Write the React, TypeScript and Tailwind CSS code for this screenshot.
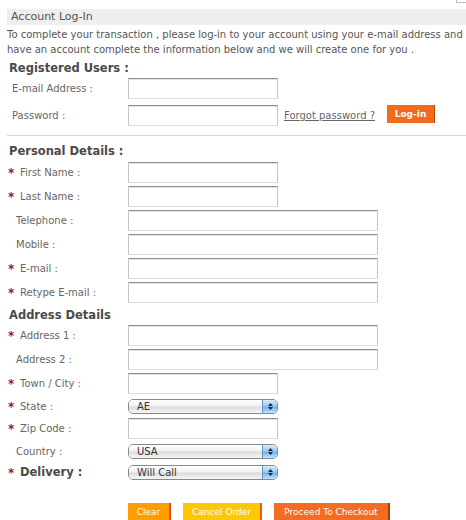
const font = "font-['DejaVu_Sans',Verdana,sans-serif]"

function TextBox({ long }: { long?: boolean }) {
  return (
    <div
      className={
        (long ? "w-[250px]" : "w-[150px]") +
        " h-[21px] shrink-0 bg-white border border-[#c6c6c6] border-t-[#8c8c8c] border-b-[#dedede] shadow-[inset_0_1px_0_#e4e4e4]"
      }
    />
  )
}

function Select({ value }: { value: string }) {
  return (
    <div className="w-[150px] h-[15px] flex rounded-[5px] border border-[#8a8a8a] overflow-hidden">
      <div className="flex-1 pl-[8px] leading-[13px] text-[10px] text-[#333] bg-[linear-gradient(#ffffff,#f1f1f1_45%,#dcdcdc_55%,#f6f6f6)]">
        {value}
      </div>
      <div className="w-[15px] border-l border-[#6a8fc0] flex flex-col items-center justify-center gap-[1px] bg-[linear-gradient(#d8ecfd,#9ccaf5_45%,#6fb0ee_55%,#c4e4fd)]">
        <svg width="5" height="3" viewBox="0 0 5 3"><path d="M0 3L2.5 0L5 3Z" fill="#1b2a44" /></svg>
        <svg width="5" height="3" viewBox="0 0 5 3"><path d="M0 0L2.5 3L5 0Z" fill="#1b2a44" /></svg>
      </div>
    </div>
  )
}

function Label({ text, req, bold }: { text: string; req?: boolean; bold?: boolean }) {
  return (
    <div className="w-[128px] shrink-0 flex items-center">
      {req ? (
        <span className="w-[20px] shrink-0 pl-[8px] text-[#8a1a4c] text-[12px] font-bold leading-none">*</span>
      ) : (
        <span className="w-[16px] shrink-0" />
      )}
      <span
        className={
          bold
            ? "text-[11.5px] font-bold text-[#4a4a4a]"
            : "text-[10px] text-[#666]"
        }
      >
        {text}
      </span>
    </div>
  )
}

export default function App() {
  return (
    <div className={"w-[466px] h-[520px] overflow-hidden relative bg-white text-[10px] text-[#555] " + font}>
      <div className="absolute top-[-2px] left-[456px] w-[14px] h-[5px] border border-[#bbb]" />

      <div className="mt-[9px] ml-[7px] h-[16px] bg-[#efefef] pl-[4px] leading-[16px] text-[11px] text-[#555]">
        Account Log-In
      </div>
      <div className="mt-[2px] ml-[7px] leading-[15px] whitespace-nowrap text-[#555]">
        <div>To complete your transaction , please log-in to your account using your e-mail address and if you don't</div>
        <div>have an account complete the information below and we will create one for you .</div>
      </div>

      <div className="mt-[3px] ml-[9px] h-[16px] leading-[16px] text-[11.5px] font-bold text-[#4a4a4a]">
        Registered Users :
      </div>
      <div className="mt-[2px] flex items-center h-[21px]">
        <div className="w-[128px] shrink-0 pl-[12px] text-[#666]">E-mail Address :</div>
        <TextBox />
      </div>
      <div className="mt-[6px] flex items-center h-[21px]">
        <div className="w-[128px] shrink-0 pl-[12px] text-[#666]">Password :</div>
        <TextBox />
        <div className="ml-[6px] w-[103px] shrink-0">
          <a className="text-[#666] underline">Forgot password ?</a>
        </div>
        <button className="w-[48px] h-[18px] mt-[-3px] bg-[#f26a1c] border-r border-[#b8470b] text-white font-bold text-[9px] leading-[18px]">
          Log-in
        </button>
      </div>

      <div className="mt-[9px] ml-[7px] border-t border-[#d4d4d4]" />

      <div className="mt-[7px] ml-[9px] h-[16px] leading-[16px] text-[11.5px] font-bold text-[#4a4a4a]">
        Personal Details :
      </div>
      <div className="mt-[3px] flex flex-col gap-[3px]">
        <div className="flex h-[21px]"><Label text="First Name :" req /><TextBox /></div>
        <div className="flex h-[21px]"><Label text="Last Name :" req /><TextBox /></div>
        <div className="flex h-[21px]"><Label text="Telephone :" /><TextBox long /></div>
        <div className="flex h-[21px]"><Label text="Mobile :" /><TextBox long /></div>
        <div className="flex h-[21px]"><Label text="E-mail :" req /><TextBox long /></div>
        <div className="flex h-[21px]"><Label text="Retype E-mail :" req /><TextBox long /></div>
      </div>

      <div className="mt-[4px] ml-[9px] h-[16px] leading-[16px] text-[11.5px] font-bold text-[#4a4a4a]">
        Address Details
      </div>
      <div className="mt-[2px] flex flex-col gap-[3px]">
        <div className="flex h-[21px]"><Label text="Address 1 :" req /><TextBox long /></div>
        <div className="flex h-[21px]"><Label text="Address 2 :" /><TextBox long /></div>
        <div className="flex h-[21px]"><Label text="Town / City :" req /><TextBox /></div>
      </div>
      <div className="mt-[5px] flex items-center h-[15px]"><Label text="State :" req /><Select value="AE" /></div>
      <div className="mt-[4px] flex h-[21px]"><Label text="Zip Code :" req /><TextBox /></div>
      <div className="mt-[5px] flex items-center h-[15px]"><Label text="Country :" /><Select value="USA" /></div>
      <div className="mt-[6px] flex items-center h-[15px]"><Label text="Delivery :" req bold /><Select value="Will Call" /></div>

      <div className="mt-[23px] ml-[128px] flex gap-[12px]">
        <button className="w-[43px] h-[19px] bg-[#ff9c00] border-r-2 border-[#ee4a16] text-white text-[9px] leading-[19px]">
          Clear
        </button>
        <button className="w-[79px] h-[19px] bg-[#ffc800] border-r-2 border-[#f25a12] text-white text-[9px] leading-[19px]">
          Cancel Order
        </button>
        <button className="w-[116px] h-[19px] bg-[#f56b1f] border-r-2 border-[#9e3f10] text-white text-[9px] leading-[19px]">
          Proceed To Checkout
        </button>
      </div>
    </div>
  )
}
